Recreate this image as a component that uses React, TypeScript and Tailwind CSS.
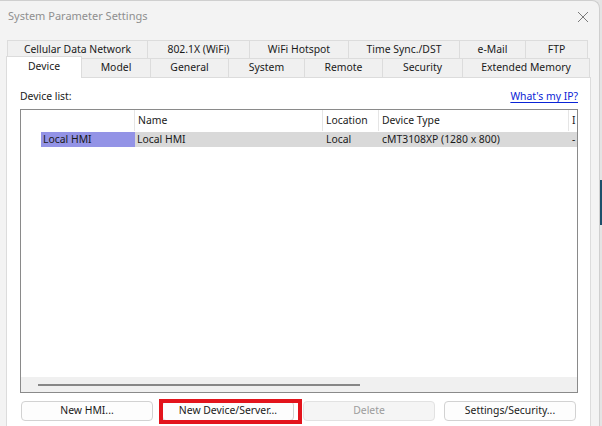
import React from "react";

const font = { fontFamily: '"Noto Sans", "Open Sans", sans-serif' };

const topTabs = [
  { label: "Cellular Data Network", w: "w-[140px]" },
  { label: "802.1X (WiFi)", w: "w-[102px]" },
  { label: "WiFi Hotspot", w: "w-[99px]" },
  { label: "Time Sync./DST", w: "w-[111px]" },
  { label: "e-Mail", w: "w-[66px]" },
  { label: "FTP", w: "w-[63px]" },
];

const bottomTabs = [
  { label: "Model", w: "w-[69px]" },
  { label: "General", w: "w-[78px]" },
  { label: "System", w: "w-[76px]" },
  { label: "Remote", w: "w-[78px]" },
  { label: "Security", w: "w-[80px]" },
  { label: "Extended Memory", w: "w-[127px]" },
];

function CloseIcon() {
  return (
    <svg width="12" height="12" viewBox="0 0 12 12" className="text-[#7a7a7a]">
      <path d="M1 1 L11 11 M11 1 L1 11" stroke="currentColor" strokeWidth="1" fill="none" />
    </svg>
  );
}

function HeaderCell({ label, w }: { label: string; w: string }) {
  return (
    <div className={`${w} h-full flex items-center pl-[3px] border-r border-[#e5e5e5] overflow-hidden whitespace-nowrap`}>
      {label}
    </div>
  );
}

export default function App() {
  return (
    <div className="flex w-[602px] h-[426px] overflow-hidden bg-[#e6e6e6] text-[10.4px] text-[#1a1a1a]" style={font}>
      <div className="w-[600px] h-full flex flex-col bg-[#f3f3f3] border-r border-t border-[#cfcfcf] rounded-tr-[8px]">
        {/* title bar */}
        <div className="h-[31px] flex items-center justify-between pl-[8px] pr-[10px]">
          <span className="text-[#8f8f8f] text-[11px]">System Parameter Settings</span>
          <CloseIcon />
        </div>

        {/* tabs */}
        <div className="pt-[8px]">
          <div className="flex ml-[7px] h-[18px]">
            {topTabs.map((t) => (
              <div
                key={t.label}
                className={`${t.w} flex items-center justify-center border-t border-l border-[#dcdcdc] last:border-r bg-[#f0f0f0] whitespace-nowrap`}
              >
                {t.label}
              </div>
            ))}
          </div>
          <div className="flex ml-[6px] h-[19px]">
            <div className="relative z-10 w-[76px] -mt-[2px] h-[22px] flex items-start justify-center pt-[2px] bg-white border-t border-l border-r border-[#dcdcdc]">
              Device
            </div>
            {bottomTabs.map((t) => (
              <div
                key={t.label}
                className={`${t.w} flex items-center justify-center border-t border-r border-[#dcdcdc] bg-[#f0f0f0] whitespace-nowrap`}
              >
                {t.label}
              </div>
            ))}
          </div>
        </div>

        {/* page */}
        <div className="ml-[6px] w-[585px] flex-1 bg-white border-l border-r border-t border-[#dcdcdc] px-[13px] pr-[12px]">
          <div className="flex items-center justify-between h-[16px] mt-[11px]">
            <span>Device list:</span>
            <a className="text-[#0a24d6] underline underline-offset-2">What's my IP?</a>
          </div>

          {/* list view */}
          <div className="mt-[4px] h-[284px] border border-[#8a8a8a] flex flex-col">
            <div className="h-[21px] flex shrink-0">
              <HeaderCell label="" w="w-[114px]" />
              <HeaderCell label="Name" w="w-[188px]" />
              <HeaderCell label="Location" w="w-[56px]" />
              <HeaderCell label="Device Type" w="w-[190px]" />
              <div className="flex-1 h-full flex items-center pl-[3px] overflow-hidden">I</div>
            </div>
            <div className="h-[15px] flex shrink-0 mt-[1px] leading-[15px]">
              <div className="w-[20px]" />
              <div className="w-[94px] bg-[#9393e6] pl-[2px]">Local HMI</div>
              <div className="flex-1 bg-[#d9d9d9] flex">
                <div className="w-[188px] pl-[2px]">Local HMI</div>
                <div className="w-[56px] pl-[3px]">Local</div>
                <div className="w-[190px] pl-[3px] whitespace-nowrap">cMT3108XP (1280 x 800)</div>
                <div className="flex-1 pl-[3px]">-</div>
              </div>
            </div>
            <div className="flex-1" />
            <div className="h-[15px] bg-[#f0f0f0] shrink-0 flex items-center pl-[17px]">
              <div className="w-[322px] h-[2px] bg-[#878787]" />
            </div>
          </div>

          {/* buttons */}
          <div className="flex gap-[9px] mt-[8px] ml-[1px]">
            <button className="w-[132px] h-[20px] rounded-[4px] border border-[#d2d2d2] bg-[#fdfdfd]">
              New HMI...
            </button>
            <div className="relative">
              <button className="w-[132px] h-[20px] rounded-[4px] border border-[#d2d2d2] bg-[#fdfdfd]">
                New Device/Server...
              </button>
              <div className="absolute -left-[3px] -right-[8px] -top-[2px] -bottom-[3px] border-[4px] border-[#e3141c]" />
            </div>
            <button className="w-[132px] h-[20px] rounded-[4px] border border-[#e2e2e2] bg-[#f5f5f5] text-[#9c9c9c]">
              Delete
            </button>
            <button className="w-[132px] h-[20px] rounded-[4px] border border-[#d2d2d2] bg-[#fdfdfd]">
              Settings/Security...
            </button>
          </div>
        </div>
      </div>
      {/* window behind */}
      <div className="w-[2px] h-full flex flex-col bg-[#e4e4e4]">
        <div className="h-[180px]" />
        <div className="h-[45px] bg-[#1d4f6b]" />
      </div>
    </div>
  );
}
